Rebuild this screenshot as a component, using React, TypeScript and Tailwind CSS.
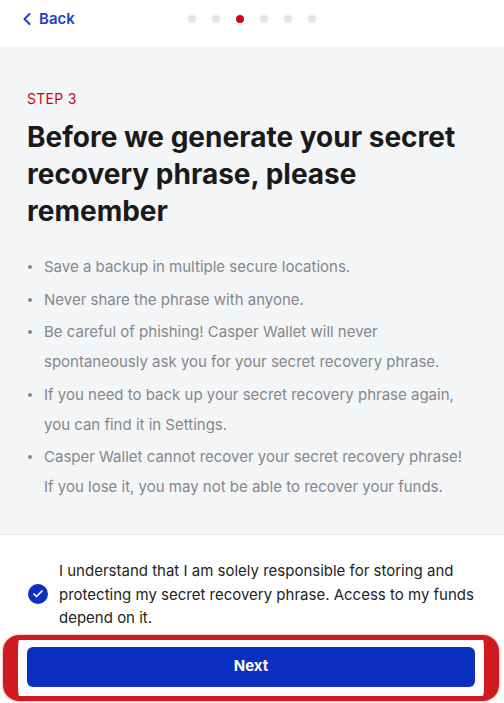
import { Check, ChevronLeft } from "lucide-react";

const tips = [
  "Save a backup in multiple secure locations.",
  "Never share the phrase with anyone.",
  "Be careful of phishing! Casper Wallet will never spontaneously ask you for your secret recovery phrase.",
  "If you need to back up your secret recovery phrase again, you can find it in Settings.",
  "Casper Wallet cannot recover your secret recovery phrase! If you lose it, you may not be able to recover your funds.",
];

export default function App() {
  const step = 2;

  return (
    <div className="flex h-[703px] w-[504px] flex-col overflow-hidden bg-white font-['Inter',sans-serif]">
      {/* header */}
      <header className="grid h-[47px] shrink-0 grid-cols-[1fr_auto_1fr] items-start px-[17px] pt-[8px]">
        <button className="flex h-[22px] items-center gap-[2px] text-[15px] font-semibold text-[#1f3fd0]">
          <ChevronLeft className="h-[20px] w-[20px]" strokeWidth={2.5} />
          Back
        </button>
        <div className="flex h-[22px] items-center gap-4">
          {[0, 1, 2, 3, 4, 5].map((i) => (
            <span
              key={i}
              className={`h-2 w-2 rounded-full ${i === step ? "bg-[#d0021b]" : "bg-[#e3e5ea]"}`}
            />
          ))}
        </div>
        <div />
      </header>

      {/* content */}
      <section className="bg-[#f4f5f7] pb-[32px] pl-[27px] pr-[36px] pt-[42px]">
        <p className="text-[14px] leading-5 tracking-[0.3px] text-[#d0021b]">STEP 3</p>
        <h1 className="mt-[10px] text-[28px] font-bold leading-[37px] text-[#1a1a1a]">
          Before we generate your secret recovery phrase, please remember
        </h1>
        <ul className="mt-[22px] flex flex-col gap-[2.5px]">
          {tips.map((t) => (
            <li key={t} className="flex text-[15px] leading-[30px] text-[#84878c]">
              <span className="mt-[13px] ml-[1px] mr-[12px] h-[4px] w-[4px] shrink-0 rounded-full bg-[#84878c]" />
              <span>{t}</span>
            </li>
          ))}
        </ul>
      </section>

      {/* footer */}
      <div className="flex flex-1 flex-col border-t border-[#e6e8ec] pl-[27px] pr-[29px] pt-[24px]">
        <label className="flex items-center gap-[11px]">
          <span className="ml-[1px] flex h-5 w-5 shrink-0 items-center justify-center rounded-full bg-[#0b2fbf]">
            <Check className="h-3 w-3 text-white" strokeWidth={3.5} />
          </span>
          <span className="text-[15px] leading-[23.5px] text-[#242424]">
            I understand that I am solely responsible for storing and protecting my secret recovery
            phrase. Access to my funds depend on it.
          </span>
        </label>
        <div className="relative mt-[17px]">
          <button className="h-10 w-full rounded-md bg-[#0b2fbf] text-[15px] font-bold text-white">
            Next
          </button>
          {/* red highlight annotation */}
          <div className="pointer-events-none absolute -bottom-[14px] -left-[24px] -right-[24px] -top-[12px] rounded-[16px] border-x-[15px] border-y-[5px] border-[#cf1b1f] shadow-[0_0_3px_rgba(160,0,0,0.45)]" />
        </div>
      </div>
    </div>
  );
}
